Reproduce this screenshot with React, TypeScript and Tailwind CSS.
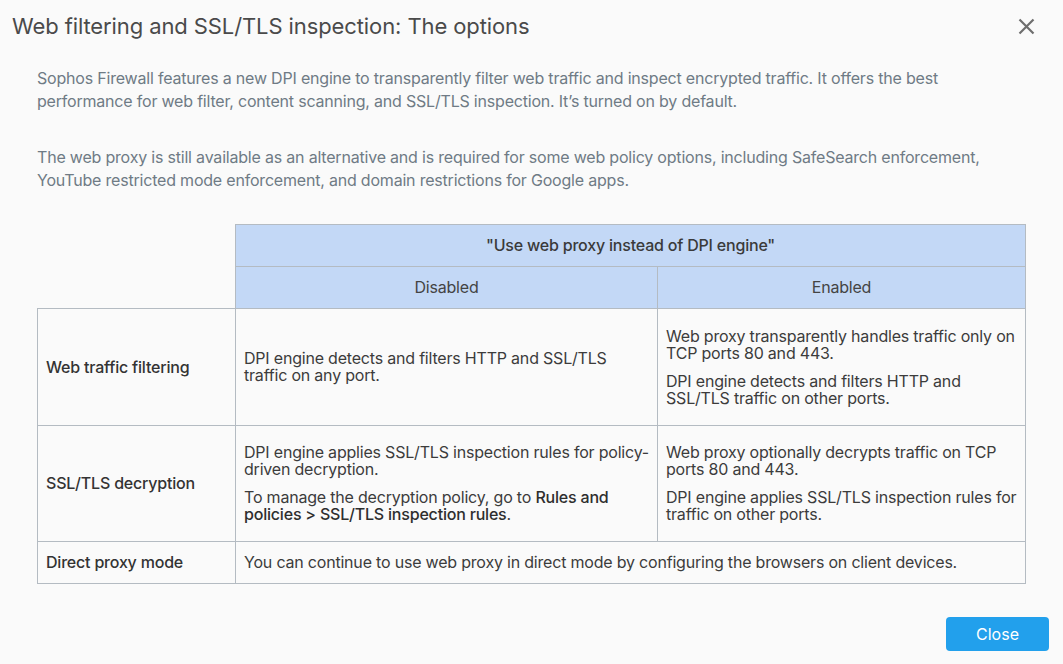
import React from "react";

const cell = "border border-[#b4bbc2] align-middle px-2";

export default function App() {
  return (
    <div
      className="w-[1063px] h-[664px] bg-[#fafafa] overflow-hidden relative"
      style={{ fontFamily: "Inter, 'Open Sans', 'Liberation Sans', sans-serif" }}
    >
      {/* header */}
      <div className="flex items-center justify-between pl-[12px] pr-[28px] pt-[8px] h-[44px]">
        <h1 className="text-[22px] tracking-[-0.1px] text-[#4a4a4a]">
          Web filtering and SSL/TLS inspection: The options
        </h1>
        <button className="w-[18px] h-[18px] flex items-center justify-center text-[#6b6b6b]">
          <svg width="17" height="17" viewBox="0 0 17 17">
            <path d="M1.5 1.5 L15.5 15.5 M15.5 1.5 L1.5 15.5" stroke="#6e6e6e" strokeWidth="2.2" />
          </svg>
        </button>
      </div>

      {/* body */}
      <div className="px-[37px] pt-[23px] text-[16px] leading-[23px] tracking-[-0.2px] text-[#6f7b85]">
        <p>
          Sophos Firewall features a new DPI engine to transparently filter web traffic and inspect encrypted traffic. It offers the best
          <br />
          performance for web filter, content scanning, and SSL/TLS inspection. It’s turned on by default.
        </p>
        <p className="mt-[33px]">
          The web proxy is still available as an alternative and is required for some web policy options, including SafeSearch enforcement,
          <br />
          YouTube restricted mode enforcement, and domain restrictions for Google apps.
        </p>

        <table className="mt-[32px] w-[988px] border-collapse text-[16px] leading-[17px] text-[#3c3c3c] table-fixed">
          <colgroup>
            <col className="w-[198px]" />
            <col className="w-[422px]" />
            <col className="w-[368px]" />
          </colgroup>
          <tbody>
            <tr className="h-[42px]">
              <td />
              <td colSpan={2} className={`${cell} bg-[#c3d8f6] text-center font-medium text-[#3a3a3a]`}>
                "Use web proxy instead of DPI engine"
              </td>
            </tr>
            <tr className="h-[42px]">
              <td className="border-r border-[#b4bbc2]" />
              <td className={`${cell} bg-[#c3d8f6] text-center text-[#444]`}>Disabled</td>
              <td className={`${cell} bg-[#c3d8f6] text-center text-[#444]`}>Enabled</td>
            </tr>
            <tr className="h-[117px]">
              <td className={`${cell} font-medium text-[#333]`}>Web traffic filtering</td>
              <td className={cell}>
                DPI engine detects and filters HTTP and SSL/TLS traffic on any port.
              </td>
              <td className={cell}>
                <p className="mb-[11px]">Web proxy transparently handles traffic only on TCP ports 80 and 443.</p>
                <p>DPI engine detects and filters HTTP and SSL/TLS traffic on other ports.</p>
              </td>
            </tr>
            <tr className="h-[116px]">
              <td className={`${cell} font-medium text-[#333]`}>SSL/TLS decryption</td>
              <td className={cell}>
                <p className="mb-[11px]">DPI engine applies SSL/TLS inspection rules for policy-driven decryption.</p>
                <p>
                  To manage the decryption policy, go to <span className="font-medium text-[#2e2e2e]">Rules and policies &gt; SSL/TLS inspection rules</span>.
                </p>
              </td>
              <td className={cell}>
                <p className="mb-[11px]">Web proxy optionally decrypts traffic on TCP ports 80 and 443.</p>
                <p>DPI engine applies SSL/TLS inspection rules for traffic on other ports.</p>
              </td>
            </tr>
            <tr className="h-[42px]">
              <td className={`${cell} font-medium text-[#333]`}>Direct proxy mode</td>
              <td colSpan={2} className={cell}>
                You can continue to use web proxy in direct mode by configuring the browsers on client devices.
              </td>
            </tr>
          </tbody>
        </table>
      </div>

      {/* footer */}
      <div className="absolute right-[14px] bottom-[13px]">
        <button className="w-[103px] h-[34px] rounded-[4px] bg-[#22a0ec] text-white text-[16px]">
          Close
        </button>
      </div>
    </div>
  );
}
